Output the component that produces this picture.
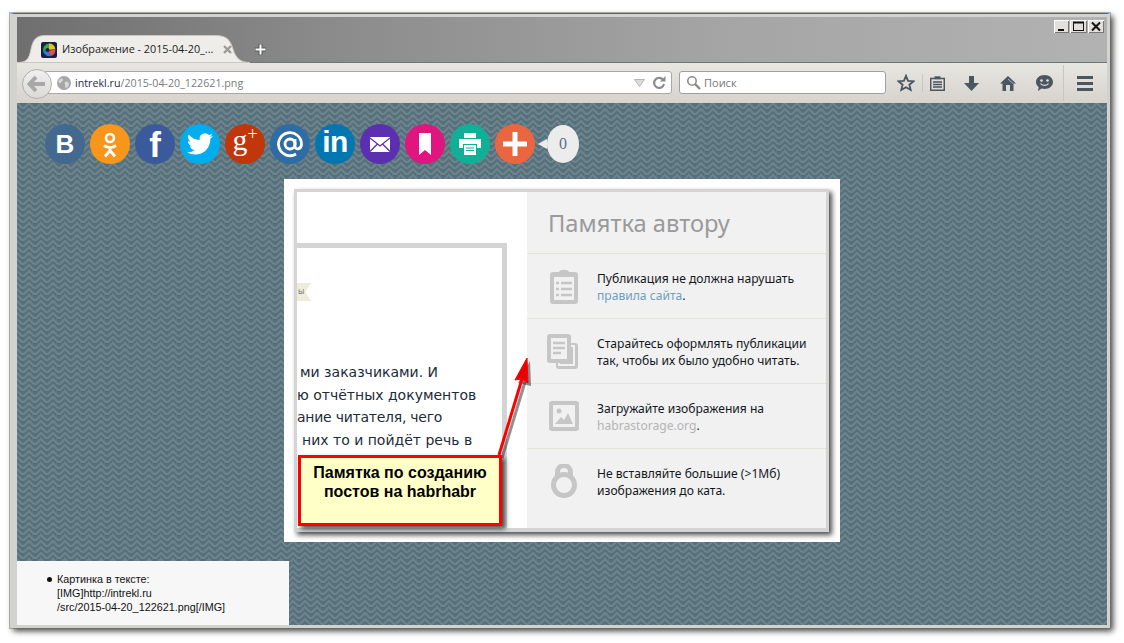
<div class="window">
  <div class="tabstrip">
    <div class="tab">
      <svg class="tabshape" width="233" height="28" viewBox="0 0 233 28"><path d="M0 27.5C10 27.5 12 24 14 14 16 4 20 .5 28 .5H198C209 .5 213 4 216 14 219 24 224 27.5 233 27.5Z" fill="#efedea" stroke="#c9c7c2"/></svg>
      <svg class="favicon" width="16" height="16" viewBox="0 0 16 16"><rect width="16" height="16" rx="2" fill="#17203f"/><path d="M2 9A6.5 6.5 0 0 1 8 1.6L8 8Z" fill="#3aa655"/><path d="M8 1.6A6.5 6.5 0 0 1 14.3 7L8 8Z" fill="#e8c12c"/><path d="M14.3 7A6.5 6.5 0 0 1 10 14L7 9Z" fill="#e2504e"/><path d="M2 9A6.5 6.5 0 0 0 10 14L7 9Z" fill="#2e7fd6"/><circle cx="6.5" cy="8" r="2" fill="#17203f"/></svg>
      <span class="tabtitle">Изображение - 2015-04-20_...</span>
      <svg class="tabclose" width="9" height="9" viewBox="0 0 9 9"><path d="M1 1L8 8M8 1L1 8" stroke="#9a9a98" stroke-width="2.4"/></svg>
    </div>
    <svg class="newtab" width="13" height="13" viewBox="0 0 13 13"><path d="M6.5 1V12M1 6.5H12" stroke="#55595c" stroke-width="4"/><path d="M6.5 1.5V11.5M1.5 6.5H11.5" stroke="#fff" stroke-width="2"/></svg>
    <div class="winbtns">
      <div class="wb"><svg width="15" height="13" viewBox="0 0 15 13"><rect x="4" y="9" width="6" height="2" fill="#111"/></svg></div>
      <div class="wb wide"><svg width="17" height="13" viewBox="0 0 17 13"><rect x="3.5" y="2.5" width="10" height="8" fill="none" stroke="#111"/><path d="M3 2.5H14" stroke="#111" stroke-width="2"/></svg></div>
      <div class="wb"><svg width="16" height="13" viewBox="0 0 16 13"><path d="M4 2.5L12 10.5M12 2.5L4 10.5" stroke="#111" stroke-width="2"/></svg></div>
    </div>
  </div>

  <div class="toolbar">
    <div class="back"><svg width="20" height="18" viewBox="0 0 20 18"><path d="M9 2L2.5 9 9 16M3 9H18" fill="none" stroke="#a8a8a6" stroke-width="4"/></svg></div>
    <div class="urlbar">
      <svg class="globe" width="14" height="14" viewBox="0 0 14 14"><circle cx="7" cy="7" r="7" fill="#a6a6a6"/><path d="M3 3C5 2 6 3 6 4S4 6 3.500 7 2 7 1.500 6 2 4 3 3ZM8 6C10 5 12 6 12 8S10 12 9 12 8 10 8 9 7 7 8 6Z" fill="#d6d6d6"/></svg>
      <span class="domain">intrekl.ru</span><span class="path">/2015-04-20_122621.png</span>
      <svg class="drop" width="11" height="8" viewBox="0 0 11 8"><path d="M.5.500H10.500L5.500 7.500Z" fill="#dcdcda" stroke="#b5b5b3"/></svg>
      <svg class="reload" width="14" height="14" viewBox="0 0 14 14"><path d="M11.500 4.500A5 5 0 1 0 12 8" fill="none" stroke="#8a8d90" stroke-width="2.2"/><path d="M8 5.500H13.500V0Z" fill="#8a8d90"/></svg>
    </div>
    <div class="search">
      <svg width="15" height="15" viewBox="0 0 15 15"><circle cx="6" cy="6" r="4.200" fill="none" stroke="#8b8b8b" stroke-width="1.600"/><path d="M9 9L14 14" stroke="#8b8b8b" stroke-width="2.400"/></svg>
      <span>Поиск</span>
    </div>
    <div class="tools">
      <svg class="t-star" width="18" height="18" viewBox="0 0 18 18"><path d="M9 1.800L11.100 6.800 16.600 7.200 12.400 10.700 13.700 16 9 13.200 4.300 16 5.600 10.700 1.400 7.200 6.900 6.800Z" fill="none" stroke="#4a5660" stroke-width="1.800"/></svg>
      <i class="sep"></i>
      <svg class="t-clip" width="15" height="15" viewBox="0 0 15 15"><path d="M.7 2.500H14.300V14.300H.7Z" fill="none" stroke="#4a5660" stroke-width="1.500"/><path d="M4.500 3.200V.3H10.500V3.200Z" fill="#4a5660"/><path d="M3 6H12M3 8.500H12M3 11H12" stroke="#4a5660" stroke-width="1.400"/></svg>
      <svg class="t-down" width="15" height="15" viewBox="0 0 15 15"><path d="M5 0H10V7H15L7.500 15 0 7H5Z" fill="#4a5660"/></svg>
      <svg class="t-home" width="16" height="15" viewBox="0 0 16 15"><path d="M8 0L16 7.500H13.500V15H10V9H6V15H2.500V7.500H0Z" fill="#4a5660"/><path d="M8 3L13 7.500" stroke="#e6e4df" stroke-width=".7"/></svg>
      <svg class="t-smile" width="17" height="16" viewBox="0 0 17 16"><path d="M8.500 0C13 0 17 2.800 17 7S13 14 8.500 14C7.500 14 6.500 13.800 5.500 13.500L2 16 2.700 12C1 10.800 0 9 0 7 0 2.800 4 0 8.500 0Z" fill="#4a5660"/><circle cx="5.500" cy="5.500" r="1.300" fill="#e6e4df"/><circle cx="11.500" cy="5.500" r="1.300" fill="#e6e4df"/><path d="M4.500 8.500C6 11 11 11 12.500 8.500" fill="none" stroke="#e6e4df" stroke-width="1.200"/></svg>
      <i class="sep tall"></i>
      <div class="burger"><i></i><i></i><i></i></div>
    </div>
  </div>

  <div class="content">
    <svg class="chevrons" width="100%" height="100%" aria-hidden="true">
      <defs><pattern id="zig" width="12" height="6" patternUnits="userSpaceOnUse"><rect width="12" height="6" fill="#56707b"/><path d="M-6 6L0 0 6 6 12 0 18 6M-6 12L0 6 6 12 12 6 18 12" fill="none" stroke="#6d848d" stroke-width="2.100"/></pattern></defs>
      <rect width="100%" height="100%" fill="url(#zig)"/>
    </svg>

    <div class="socials">
      <div class="soc vk"><span class="b">В</span></div>
      <div class="soc ok"><svg width="22" height="28" viewBox="0 0 22 28"><circle cx="11" cy="8" r="4" fill="none" stroke="#fff" stroke-width="2.600"/><path d="M5 15.500C8.500 18 13.500 18 17 15.500M11 17V20.500M6 26.500L11 20.500 16 26.500" fill="none" stroke="#fff" stroke-width="2.800"/></svg></div>
      <div class="soc fb"><span class="f">f</span></div>
      <div class="soc tw"><svg width="26" height="26" viewBox="0 0 24 24"><path fill="#fff" d="M23.953 4.570a10 10 0 0 1-2.825.775 4.958 4.958 0 0 0 2.163-2.723c-.951.555-2.005.959-3.127 1.184a4.920 4.920 0 0 0-8.384 4.482C7.690 8.095 4.067 6.130 1.640 3.162a4.822 4.822 0 0 0-.666 2.475c0 1.710.870 3.213 2.188 4.096a4.904 4.904 0 0 1-2.228-.616v.060a4.923 4.923 0 0 0 3.946 4.827 4.996 4.996 0 0 1-2.212.085 4.936 4.936 0 0 0 4.604 3.417 9.867 9.867 0 0 1-6.102 2.105c-.390 0-.779-.023-1.170-.067a13.995 13.995 0 0 0 7.557 2.209c9.053 0 13.998-7.496 13.998-13.985 0-.210 0-.420-.015-.630A9.935 9.935 0 0 0 24 4.590z"/></svg></div>
      <div class="soc gp"><span class="g">g<sup>+</sup></span></div>
      <div class="soc ml"><svg width="28" height="28" viewBox="0 0 28 28"><circle cx="14" cy="14" r="5" fill="none" stroke="#fff" stroke-width="2.800"/><path d="M19 9V16.500C19 20 25.500 20 25.500 14A11.500 11.500 0 1 0 20 24" fill="none" stroke="#fff" stroke-width="2.800"/></svg></div>
      <div class="soc li"><span class="in">in</span></div>
      <div class="soc em"><svg width="20" height="15" viewBox="0 0 20 15"><rect width="20" height="15" fill="#fff"/><path d="M0 1L10 9 20 1M0 14.500L7.500 7M20 14.500L12.500 7" fill="none" stroke="#5b2db0" stroke-width="1.300"/></svg></div>
      <div class="soc bm"><svg width="12" height="22" viewBox="0 0 12 22"><path d="M0 0H12V22L6 17 0 22Z" fill="#fff"/></svg></div>
      <div class="soc pr"><svg width="22" height="22" viewBox="0 0 22 22"><path d="M5 0H17V5H5ZM0 6H22V15H18V11H4V15H0Z" fill="#fff"/><path d="M5 12H17V22H5Z" fill="#fff"/><path d="M7 15H15M7 17.500H15" stroke="#10b096"/></svg></div>
      <div class="soc pl"><svg width="24" height="24" viewBox="0 0 24 24"><path d="M12 0V24M0 12H24" stroke="#fff" stroke-width="5"/></svg></div>
      <div class="count">0</div>
    </div>

    <div class="picture">
      <div class="shot">
        <div class="left">
          <div class="article">
            <div class="ribbon"><span>ы</span></div>
            <div class="lines">
              <div class="l1">ми заказчиками. И</div>
              <div class="l2">ю отчётных документов</div>
              <div class="l3">ание читателя, чего</div>
              <div class="l4">них то и пойдёт речь в</div>
            </div>
          </div>
        </div>
        <div class="side">
          <h2>Памятка автору</h2>
          <div class="row">
            <svg width="28" height="35" viewBox="0 0 28 35"><path d="M3 3H9C10 0 18 0 19 3H25Q28 3 28 6V32Q28 35 25 35H3Q0 35 0 32V6Q0 3 3 3Z" fill="#c6c6c6"/><rect x="4" y="8" width="20" height="23" fill="#f1f1f1"/><path d="M6 14H9M11 14H22M6 20H9M11 20H22M6 26H9M11 26H22" stroke="#c6c6c6" stroke-width="2.500"/></svg>
            <p>Публикация не должна нарушать<br><a class="blue" href="#a">правила сайта</a>.</p>
          </div>
          <div class="row">
            <svg class="docs" width="31" height="35" viewBox="0 0 31 35"><rect x="9" y="9" width="22" height="26" rx="3" fill="#c6c6c6"/><rect x="0" y="0" width="24" height="29" rx="3" fill="#c6c6c6"/><path d="M24 12H27V31H12V29" fill="none" stroke="#f1f1f1" stroke-width="2"/><rect x="4" y="4" width="16" height="21" fill="#f1f1f1"/><path d="M6 9H18M6 14H18M6 19H14" stroke="#c6c6c6" stroke-width="2.500"/></svg>
            <p>Старайтесь оформлять публикации<br>так, чтобы их было удобно читать.</p>
          </div>
          <div class="row">
            <svg class="pic" width="30" height="30" viewBox="0 0 30 30"><rect width="30" height="30" rx="3" fill="#c6c6c6"/><rect x="4" y="4" width="22" height="22" fill="#f1f1f1"/><circle cx="10" cy="10" r="2.500" fill="#c6c6c6"/><path d="M6 23L12 16 15 19 19 12 24 23Z" fill="#c6c6c6"/></svg>
            <p>Загружайте изображения на<br><a class="grey" href="#b">habrastorage.org</a>.</p>
          </div>
          <div class="row">
            <svg class="lock" width="26" height="34" viewBox="0 0 26 34"><circle cx="13" cy="21" r="10.500" fill="none" stroke="#c6c6c6" stroke-width="5"/><path d="M6.500 12V8A6.500 6.500 0 0 1 19.500 8V12" fill="none" stroke="#c6c6c6" stroke-width="5"/></svg>
            <p>Не вставляйте большие (&gt;1Мб)<br>изображения до ката.</p>
          </div>
        </div>
        <svg class="arrow" width="60" height="110" viewBox="0 0 60 110">
          <path d="M18 100L41 24" stroke="#222" stroke-opacity=".5" stroke-width="3" transform="translate(3 3)"/>
          <path d="M34 25L46 3 47 28Z" fill="#222" fill-opacity=".5" transform="translate(3 3)"/>
          <path d="M18 100L41 24" stroke="#f00" stroke-width="3"/>
          <path d="M34 25L46 3 47 28 41 24Z" fill="#e80000" stroke="#f00"/>
        </svg>
        <div class="callout">Памятка по созданию<br>постов на habrhabr</div>
      </div>
    </div>

    <div class="note">
      <ul><li>Картинка в тексте:<br>[IMG]http://intrekl.ru<br>/src/2015-04-20_122621.png[/IMG]</li></ul>
    </div>
  </div>
</div>

<style>
  :global(body) { margin: 0; background: #fff; min-height: 643px; }
  .window {
    box-sizing: border-box;
    width: 1100px;
    height: 615px;
    margin: 13px 0 0 10px;
    border: 3px solid #d2d2ce;
    border-left-width: 4px;
    border-top: 1px solid #3d6a8a;
    outline: 1px solid rgba(110,110,110,.5);
    box-shadow: 3px 3px 6px rgba(0,0,0,.75);
    display: flex;
    flex-direction: column;
    padding: 3px 0 0 3px;
    position: relative;
    font-family: "Open Sans", "Liberation Sans", sans-serif;
    background: #d2d2ce;
  }
  .tabstrip {
    height: 46px;
    flex: none;
    display: flex;
    align-items: flex-end;
    background: linear-gradient(90deg, #6f6f6f 0%, #8c8c8c 30%, #a5a5a5 65%, #b2b2b2 100%);
    position: relative;
    border-bottom: 1px solid #6d747a;
    box-sizing: border-box;
  }
  .tab {
    position: relative;
    width: 233px;
    height: 27px;
    display: flex;
    align-items: center;
    padding: 0 0 0 24px;
    box-sizing: border-box;
    margin-bottom: -1px;
  }
  .tabshape { position: absolute; left: 0; top: -1px; }
  .favicon { position: relative; }
  .tabtitle { position: relative; margin: -2px 0 0 5px; font-size: 10.800px; color: #1d1d1d; width: 158px; white-space: nowrap; }
  .tabclose { position: relative; margin-left: 3px; }
  .newtab { margin: 0 0 6px 4px; }
  .winbtns { position: absolute; right: 3px; top: 3px; display: flex; gap: 1px; }
  .wb {
    width: 15px; height: 13px;
    background: #e2e0da;
    box-shadow: inset 1px 1px 0 #fff, inset -1px -1px 0 #777;
    display: flex;
  }
  .wb.wide { width: 17px; }
  .wb:last-child { width: 16px; }

  .toolbar {
    height: 40px;
    flex: none;
    box-sizing: border-box;
    background: linear-gradient(#e8e6e1, #d6d3cd);
    display: flex;
    align-items: flex-start;
    padding: 8px 0 0 5px;
    position: relative;
  }
  .back {
    width: 30px; height: 30px;
    margin-top: -2px;
    border-radius: 50%;
    background: linear-gradient(#f1f0ed, #dcdad6);
    border: 1px solid #b0b0ae;
    box-sizing: border-box;
    display: flex; align-items: center; justify-content: center;
    position: relative; z-index: 1;
  }
  .urlbar {
    width: 627px; height: 23px;
    margin-left: -7px;
    box-sizing: border-box;
    background: #fff;
    border: 1px solid #a8a8a6;
    border-radius: 0 3px 3px 0;
    display: flex; align-items: center;
    padding-left: 11px;
    font-size: 10.700px;
  }
  .globe { margin-right: 4px; }
  .domain { color: #1f2a44; }
  .path { color: #7a7a7a; }
  .drop { margin-left: auto; margin-right: 7px; }
  .reload { margin-right: 5px; }
  .search {
    width: 207px; height: 23px;
    margin-left: 7px;
    box-sizing: border-box;
    background: #fff;
    border: 1px solid #a0a0a0;
    border-radius: 3px;
    display: flex; align-items: center;
    padding-left: 6px;
    gap: 3px;
    font-size: 11px;
    color: #777;
  }
  .tools { display: flex; align-items: center; height: 24px; margin-left: 11px; }
  .sep { width: 1px; height: 18px; background: #c8c6c0; margin-left: 7px; display: block; }
  .sep.tall { height: 36px; margin-left: 10px; }
  .t-clip { margin-left: 7px; }
  .t-down { margin-left: 19px; }
  .t-home { margin-left: 21px; }
  .t-smile { margin-left: 20px; }
  .burger { margin-left: 13px; width: 16px; display: flex; flex-direction: column; gap: 3px; }
  .burger i { display: block; height: 3px; background: #4a5660; }

  .content {
    flex: 1;
    position: relative;
    display: flex;
    flex-direction: column;
    min-height: 0;
  }
  .chevrons { position: absolute; inset: 0; }
  .socials {
    position: relative;
    display: flex;
    gap: 5px;
    margin: 21px 0 0 28px;
    height: 40px;
    align-items: center;
  }
  .soc {
    width: 40px; height: 40px;
    border-radius: 50%;
    flex: none;
    display: flex; align-items: center; justify-content: center;
    color: #fff;
    font-family: "Liberation Sans", sans-serif;
    font-weight: 700;
    overflow: hidden;
  }
  .vk { background: #44698f; }
  .ok { background: #f7961a; }
  .fb { background: #3b5a9c; }
  .tw { background: #00adef; }
  .gp { background: #c1360a; }
  .ml { background: #2f6ca6; }
  .li { background: #0077b0; }
  .em { background: #5b2fb0; }
  .bm { background: #e0157f; }
  .pr { background: #10b097; }
  .pl { background: #ea6640; }
  .b { font-size: 26px; }
  .f { font-size: 35px; margin-top: 2px; }
  .g { font-family: "Liberation Serif", serif; font-size: 30px; font-weight: 400; margin-top: -8px; }
  .g sup { font-size: 18px; line-height: 0; vertical-align: 10px; }
  .in { font-size: 30px; margin-top: -4px; letter-spacing: -.5px; }
  .count {
    position: relative;
    width: 32px; height: 38px;
    margin-left: 7px;
    border-radius: 50%;
    background: #ececec;
    color: #5c6f85;
    font-family: "Liberation Serif", serif;
    font-size: 16px;
    display: flex; align-items: center; justify-content: center;
  }
  .count::before {
    content: "";
    position: absolute;
    left: -9px; top: 14px;
    border: 5px solid transparent;
    border-right: 9px solid #ececec;
    border-left: 0;
  }
  .picture {
    position: relative;
    box-sizing: border-box;
    width: 556px; height: 363px;
    margin: 15px 0 0 267px;
    background: #fff;
    padding: 10px 0 0 10px;
    flex: none;
  }
  .shot {
    position: relative;
    box-sizing: border-box;
    width: 535px; height: 343px;
    border: 3px solid #d4d4d4;
    border-bottom-width: 4px;
    box-shadow: 3px 3px 5px rgba(0,0,0,.7);
    display: flex;
    background: #fff;
    font-family: "DejaVu Sans", sans-serif;
  }
  .left { width: 230px; flex: none; padding-top: 51px; box-sizing: border-box; overflow: hidden; }
  .article {
    box-sizing: border-box;
    width: 210px; height: 285px;
    border-top: 5px solid #d4d4d4;
    border-right: 5px solid #d4d4d4;
    padding-top: 35px;
  }
  .ribbon {
    width: 14px; height: 18px;
    background: #efecdc;
    clip-path: polygon(0 0, 100% 0, 60% 50%, 100% 100%, 0 100%);
    font-size: 8px;
    color: #777;
    line-height: 18px;
  }
  .ribbon span { display: block; margin-left: 1px; }
  .lines {
    margin-top: 60px;
    font-size: 14px;
    line-height: 22.700px;
    color: #1c2c38;
    white-space: nowrap;
  }
  .l1 { margin-left: 3px; }
  .l3 { letter-spacing: -.25px; }
  .l4 { margin-left: 5px; }
  .side {
    flex: 1;
    background: #f1f1f1;
    color: #111;
    font-family: "Noto Sans", sans-serif;
  }
  h2 {
    margin: 0;
    height: 61px;
    box-sizing: border-box;
    padding: 16px 0 0 21px;
    font-size: 23.700px;
    line-height: 30px;
    font-weight: 400;
    color: #9a9a9a;
  }
  .row {
    height: 65px;
    box-sizing: border-box;
    border-top: 1px solid #e5e3da;
    display: grid;
    grid-template-columns: 47px 1fr;
    align-items: center;
    padding-left: 23px;
  }
  .docs { margin-left: -3px; }
  .pic { margin-left: -1px; }
  .lock { margin-left: 1px; }
  .row p { margin: 1px 0 0; font-size: 12.100px; line-height: 17px; color: #14181c; white-space: nowrap; }
  .blue { color: #6f9fbf; text-decoration: none; }
  .grey { color: #b4b4b4; text-decoration: none; }
  .arrow { position: absolute; left: 184px; top: 163px; }
  .callout {
    position: absolute;
    left: 1px; top: 263px;
    box-sizing: border-box;
    width: 204px; height: 71px;
    background: #ffffc8;
    border: 3px solid #f00;
    box-shadow: 3px 3px 5px rgba(0,0,0,.7);
    font-family: "Liberation Sans", sans-serif;
    font-weight: 700;
    font-size: 16px;
    line-height: 19px;
    color: #000;
    text-align: center;
    padding-top: 5px;
  }
  .note {
    position: relative;
    width: 272px; height: 64px;
    margin-top: 19px;
    background: #f7f7f7;
    flex: none;
    font-family: "Liberation Sans", sans-serif;
    font-size: 10.800px;
    line-height: 14px;
    color: #111;
  }
  ul { margin: 0; padding: 11px 0 0 40px; list-style: none; }
  li { position: relative; }
  li::before {
    content: "";
    position: absolute;
    left: -10px; top: 5px;
    width: 5px; height: 5px;
    border-radius: 50%;
    background: #111;
  }
</style>
